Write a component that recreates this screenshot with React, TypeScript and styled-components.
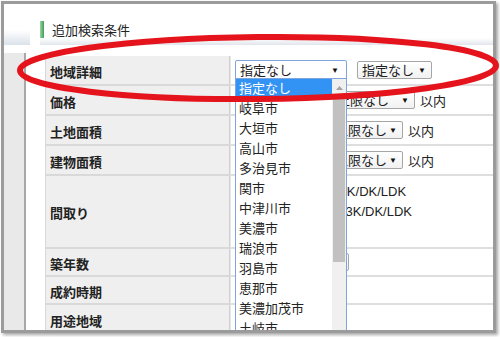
import React from "react";
import styled, { createGlobalStyle } from "styled-components";

const GlobalStyle = createGlobalStyle`
  html, body {
    margin: 0;
    padding: 0;
    background: #fff;
  }
  body {
    font-family: "Liberation Sans", "Noto Sans CJK JP", sans-serif;
  }
`;

const CITIES = [
  "指定なし",
  "岐阜市",
  "大垣市",
  "高山市",
  "多治見市",
  "関市",
  "中津川市",
  "美濃市",
  "瑞浪市",
  "羽島市",
  "恵那市",
  "美濃加茂市",
  "土岐市",
  "各務原市",
];

const Screen = styled.div`
  position: relative;
  width: 500px;
  height: 337px;
  padding: 1px 0 0 1px;
  box-sizing: border-box;
  overflow: hidden;
`;

const Frame = styled.div`
  position: relative;
  display: flex;
  width: 495px;
  height: 332px;
  box-sizing: border-box;
  border: 3px solid #9b9b9b;
  box-shadow: 2px 2px 3px rgba(0, 0, 0, 0.35);
  overflow: hidden;
  background: #fff;
`;

const Side = styled.div`
  display: flex;
  flex-direction: column;
  flex: none;
  width: 26px;
`;

const SideHead = styled.div`
  flex: none;
  height: 15px;
  margin-top: 26px;
  background: linear-gradient(#fff, #dbe2ea);
`;

const SideBody = styled.div`
  flex: 1;
  width: 20px;
  margin-top: 8px;
  background: #e9e9e9;
  border-right: 2px solid #a8a8a8;
`;

const Main = styled.div`
  flex: 1;
  min-width: 0;
  display: flex;
  flex-direction: column;
`;

const Heading = styled.div`
  flex: none;
  display: flex;
  align-items: center;
  gap: 8px;
  height: 17px;
  margin: 17px 0 0 10px;
  font-size: 13px;
  color: #222;
`;

const Bar = styled.span`
  width: 4px;
  height: 17px;
  background: linear-gradient(90deg, #9ad6a4, #3f9b56);
`;

const Band = styled.div`
  flex: none;
  height: 7px;
  margin-left: 10px;
  background: linear-gradient(#fff, #e1e6ec);
`;

const Table = styled.div`
  flex: none;
  margin: 11px 0 0 15px;
`;

const Row = styled.div<{ $h: number }>`
  display: grid;
  grid-template-columns: 185px 1fr;
  height: ${(p) => p.$h}px;
`;

const Label = styled.div`
  display: flex;
  align-items: center;
  box-sizing: border-box;
  padding: 2px 0 0 4px;
  background: #efefef;
  border-left: 1px solid #d8d8d8;
  border-right: 1px solid #d0d0d0;
  border-bottom: 2px solid #d9d9d9;
  font-size: 13px;
  font-weight: bold;
  color: #222;
`;

const Value = styled.div<{ $column?: boolean }>`
  display: flex;
  flex-direction: ${(p) => (p.$column ? "column" : "row")};
  align-items: ${(p) => (p.$column ? "flex-start" : "center")};
  justify-content: ${(p) => (p.$column ? "center" : "flex-start")};
  box-sizing: border-box;
  padding-left: 4px;
  border-left: 1px solid #e8e8e8;
  border-bottom: 2px solid #dedede;
  font-size: 13px;
  color: #222;
`;

const Select = styled.div<{ $w: number; $h?: number; $focus?: boolean }>`
  display: flex;
  align-items: center;
  justify-content: space-between;
  flex: none;
  box-sizing: border-box;
  width: ${(p) => p.$w}px;
  height: ${(p) => p.$h ?? 18}px;
  margin-right: ${(p) => (p.$focus ? 10 : 0)}px;
  padding: 1px ${(p) => (p.$focus ? 7 : 5)}px 0 4px;
  border: 1px solid ${(p) => (p.$focus ? "#7ea6dc" : "#a6a6a6")};
  border-radius: 2px;
  background: ${(p) => (p.$focus ? "#fff" : "linear-gradient(#ffffff, #f1f1f1)")};
  font-size: 13px;
  line-height: 16px;
  white-space: nowrap;
`;

const Arrow = styled.span`
  font-size: 8px;
  color: #111;
`;

const Unit = styled.span<{ $gap?: number }>`
  margin: 0 ${(p) => p.$gap ?? 2}px;
  font-size: 13px;
  white-space: nowrap;
`;

const CheckLine = styled.div`
  display: flex;
  align-items: center;
  height: 20px;
`;

const Check = styled.span<{ $space: number }>`
  display: flex;
  align-items: center;
  margin-right: ${(p) => p.$space}px;
  font-size: 13px;
  white-space: nowrap;
`;

const Box = styled.span`
  width: 12px;
  height: 12px;
  margin-right: 3px;
  box-sizing: border-box;
  border: 1px solid #8f8f8f;
  border-radius: 2px;
  background: #fff;
`;

const List = styled.div`
  position: absolute;
  left: 231px;
  top: 74px;
  display: flex;
  width: 112px;
  height: 280px;
  box-sizing: border-box;
  border: 1px solid #7ea6dc;
  background: #fff;
`;

const Items = styled.ul`
  flex: 1;
  margin: 0;
  padding: 0;
  list-style: none;
`;

const Item = styled.li<{ $active?: boolean }>`
  height: 20px;
  padding-left: 3px;
  line-height: 20px;
  font-size: 13px;
  white-space: nowrap;
  color: ${(p) => (p.$active ? "#fff" : "#222")};
  background: ${(p) => (p.$active ? "#3393f5" : "transparent")};
`;

const Scroll = styled.div`
  display: flex;
  flex-direction: column;
  flex: none;
  width: 14px;
  background: #f0f0f0;
`;

const ScrollUp = styled.div`
  display: flex;
  align-items: center;
  justify-content: center;
  height: 18px;
`;

const Thumb = styled.div`
  height: 165px;
  margin: 0 1px;
  background: #c1c1c1;
`;

const Mark = styled.svg`
  position: absolute;
  left: 0;
  top: 0;
  pointer-events: none;
`;

const Sel = ({ text, w, h, focus }: { text: string; w: number; h?: number; focus?: boolean }) => (
  <Select $w={w} $h={h} $focus={focus}>
    <span>{text}</span>
    <Arrow>▼</Arrow>
  </Select>
);

const Range = ({ a, b }: { a: number; b: number }) => (
  <>
    <Sel text="下限なし" w={a} />
    <Unit>～</Unit>
    <Sel text="上限なし" w={b} />
    <Unit $gap={5}>以内</Unit>
  </>
);

const Checkbox = ({ text, space = 14 }: { text: string; space?: number }) => (
  <Check $space={space}>
    <Box />
    {text}
  </Check>
);

export default function App() {
  return (
    <>
      <GlobalStyle />
      <Screen>
        <Frame>
          <Side>
            <SideHead />
            <SideBody />
          </Side>
          <Main>
            <Heading>
              <Bar />
              追加検索条件
            </Heading>
            <Band />
            <Table>
              <Row $h={30}>
                <Label>地域詳細</Label>
                <Value>
                  <Sel text="指定なし" w={112} h={20} focus />
                  <Sel text="指定なし" w={75} />
                </Value>
              </Row>
              <Row $h={30}>
                <Label>価格</Label>
                <Value>
                  <Range a={80} b={83} />
                </Value>
              </Row>
              <Row $h={30}>
                <Label>土地面積</Label>
                <Value>
                  <Range a={78} b={73} />
                </Value>
              </Row>
              <Row $h={30}>
                <Label>建物面積</Label>
                <Value>
                  <Range a={78} b={73} />
                </Value>
              </Row>
              <Row $h={73}>
                <Label>間取り</Label>
                <Value $column>
                  <CheckLine>
                    <Checkbox text="ワンルーム" space={10} />
                    <Checkbox text="1K/DK/LDK" />
                  </CheckLine>
                  <CheckLine>
                    <Checkbox text="2K/DK/LDK" />
                    <Checkbox text="3K/DK/LDK" />
                  </CheckLine>
                  <CheckLine>
                    <Checkbox text="4K以上" />
                  </CheckLine>
                </Value>
              </Row>
              <Row $h={28}>
                <Label>築年数</Label>
                <Value>
                  <Sel text="指定なし" w={114} />
                </Value>
              </Row>
              <Row $h={28}>
                <Label>成約時期</Label>
                <Value>
                  <Sel text="指定なし" w={100} />
                </Value>
              </Row>
              <Row $h={30}>
                <Label>用途地域</Label>
                <Value>
                  <Sel text="指定なし" w={100} />
                </Value>
              </Row>
            </Table>
          </Main>
          <List>
            <Items>
              {CITIES.map((c, i) => (
                <Item key={c} $active={i === 0}>
                  {c}
                </Item>
              ))}
            </Items>
            <Scroll>
              <ScrollUp>
                <svg width="7" height="4" viewBox="0 0 7 4">
                  <path d="M0 4 L3.5 0 L7 4 Z" fill="#a3a3a3" />
                </svg>
              </ScrollUp>
              <Thumb />
            </Scroll>
          </List>
        </Frame>
        <Mark width="500" height="337" viewBox="0 0 500 337">
          <ellipse
            cx="258"
            cy="68"
            rx="238"
            ry="31"
            transform="rotate(-0.6 258 68)"
            fill="none"
            stroke="#e5131b"
            strokeWidth="6"
          />
        </Mark>
      </Screen>
    </>
  );
}
